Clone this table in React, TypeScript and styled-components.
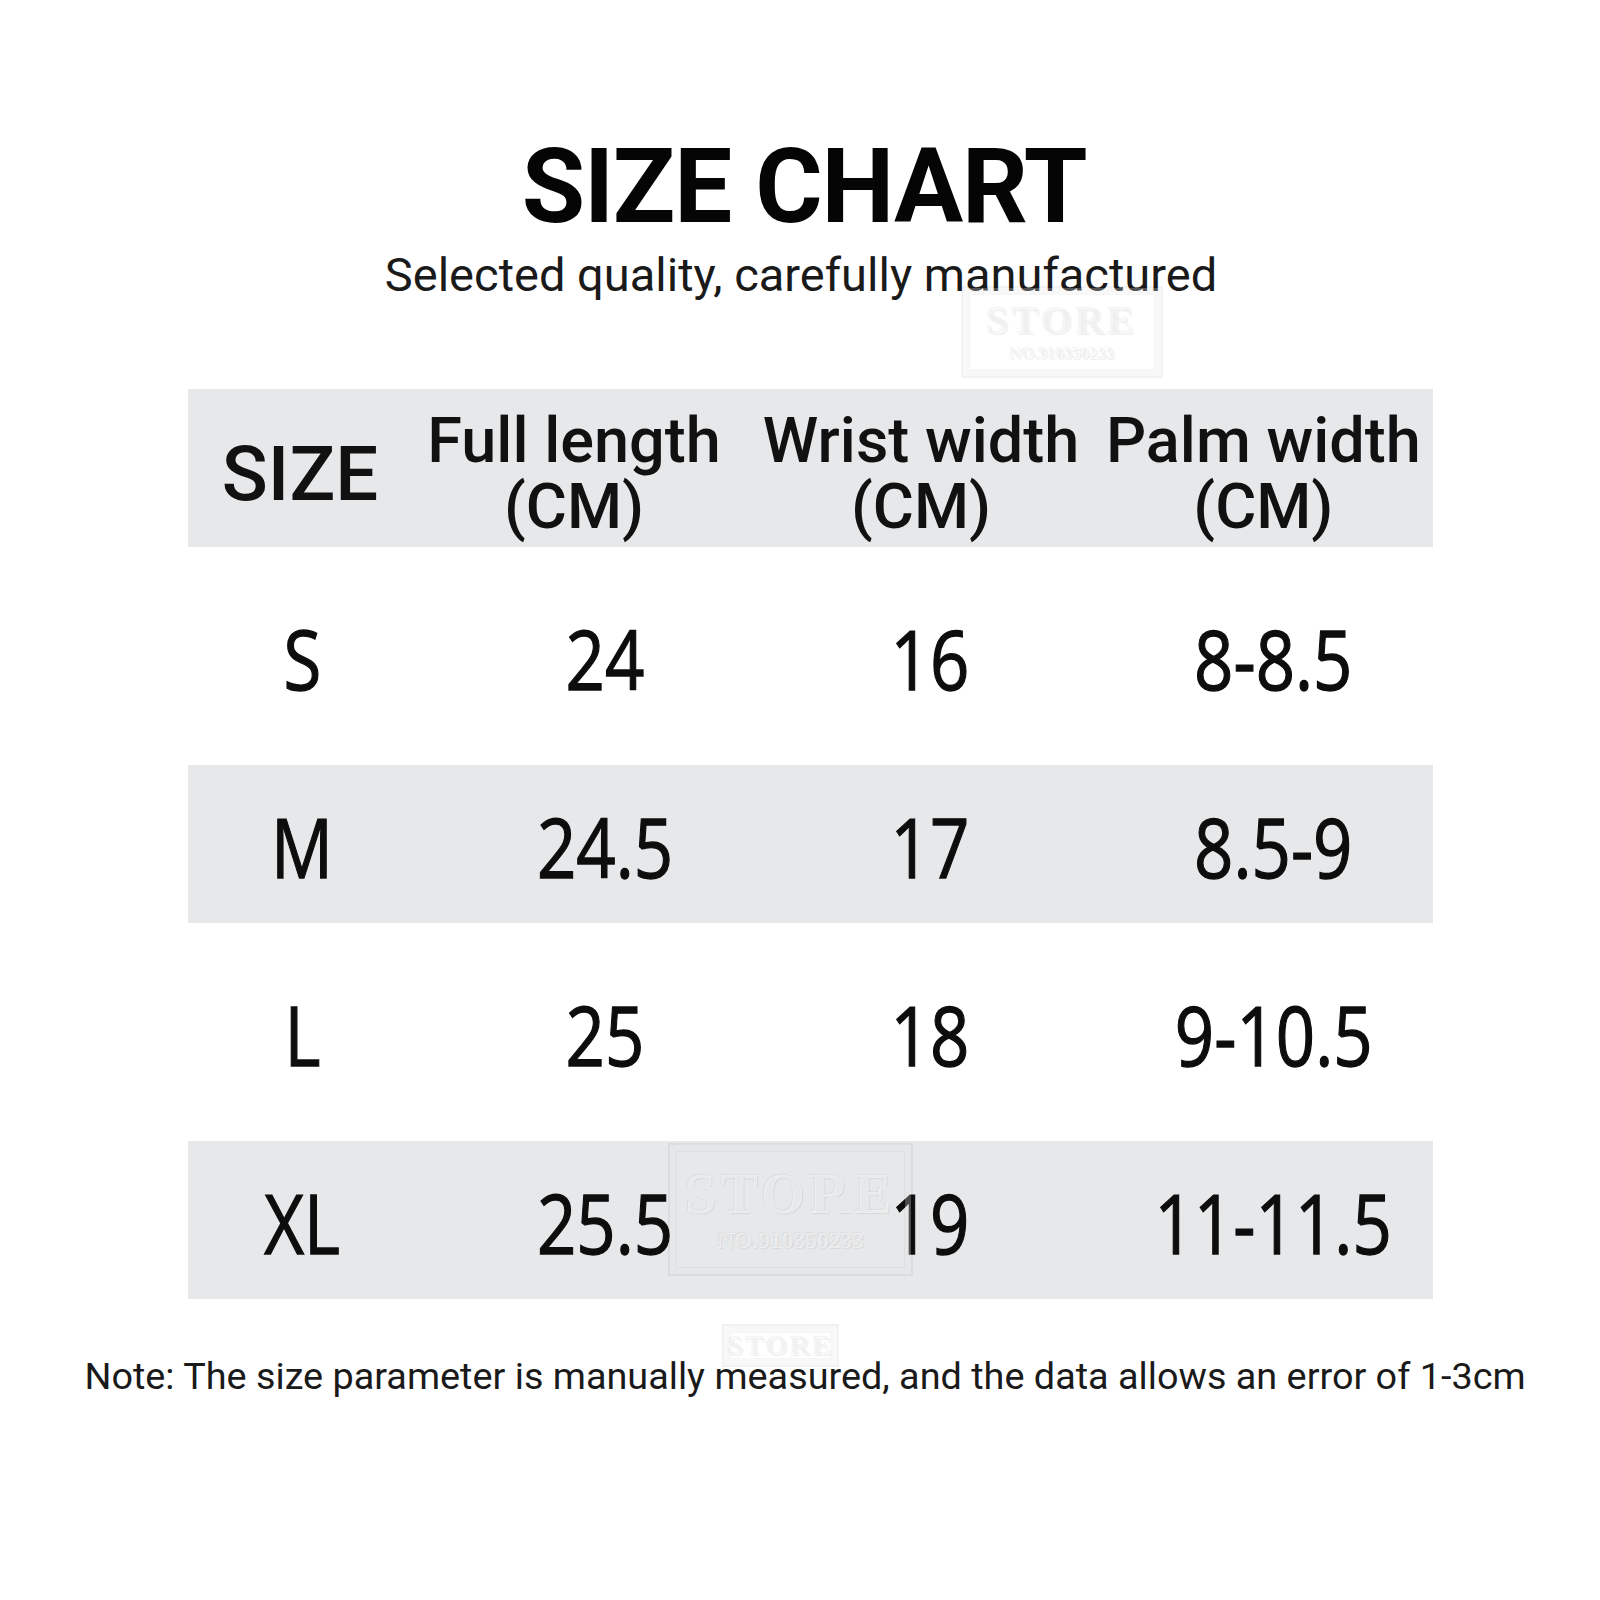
import React from "react";
import styled, { createGlobalStyle } from "styled-components";

const Global = createGlobalStyle`
  html, body { margin: 0; padding: 0; background: #ffffff; }
  body { font-family: Roboto, "Liberation Sans", sans-serif; }
`;

const Page = styled.div`
  position: relative;
  width: 1600px;
  height: 1600px;
  background: #ffffff;
  display: flex;
  flex-direction: column;
  align-items: center;
  overflow: hidden;
`;

const Title = styled.h1`
  margin: 135px 0 0 8px;
  font-family: Roboto, "Liberation Sans", sans-serif;
  font-weight: 700;
  font-size: 103px;
  line-height: 1;
  color: #050505;
  letter-spacing: -1.2px;
`;

const Subtitle = styled.p`
  margin: 13px 0 0 2px;
  font-family: Roboto, "Liberation Sans", sans-serif;
  font-weight: 400;
  font-size: 47px;
  line-height: 1;
  color: #1a1a1a;
`;

const Table = styled.div`
  align-self: flex-start;
  margin: 91px 0 0 188px;
  width: 1245px;
  display: flex;
  flex-direction: column;
  gap: 30px;
`;

const Row = styled.div<{ $shaded?: boolean }>`
  display: grid;
  grid-template-columns: 224px 324px 370px 1fr;
  height: 158px;
  background: ${(p) => (p.$shaded ? "#e6e8ea" : "transparent")};
`;

const HeadCell = styled.div<{ $big?: boolean; $dx?: number }>`
  display: flex;
  flex-direction: column;
  align-items: center;
  justify-content: center;
  font-family: Roboto, "Liberation Sans", sans-serif;
  font-weight: 500;
  font-size: ${(p) => (p.$big ? 76 : 63)}px;
  line-height: ${(p) => (p.$big ? "76px" : "66px")};
  color: #111;
  white-space: nowrap;
  padding-top: 12px;
  padding-left: ${(p) => Math.max(0, (p.$dx || 0) * 2)}px;
  padding-right: ${(p) => Math.max(0, -(p.$dx || 0) * 2)}px;
`;

const HeadLine = styled.span`
  display: block;
`;

const DataCell = styled.div<{ $dx?: number }>`
  display: flex;
  align-items: center;
  justify-content: center;
  padding-top: 4px;
  padding-left: ${(p) => Math.max(0, (p.$dx || 0) * 2)}px;
  padding-right: ${(p) => Math.max(0, -(p.$dx || 0) * 2)}px;
`;

const DataText = styled.span`
  display: inline-block;
  font-family: "Open Sans", "Noto Sans", sans-serif;
  font-weight: 400;
  font-size: 82px;
  line-height: 1;
  color: #0d0d0d;
  -webkit-text-stroke: 1.3px #0d0d0d;
  white-space: nowrap;
  transform: scaleX(0.84);
  transform-origin: center;
`;

const Note = styled.p`
  margin: 59px 0 0 10px;
  font-family: Roboto, "Liberation Sans", sans-serif;
  font-weight: 400;
  font-size: 37.8px;
  line-height: 1;
  color: #1a1a1a;
  white-space: nowrap;
`;

const Stamp = styled.div<{ $x: number; $y: number; $w: number; $h: number; $s: number }>`
  position: absolute;
  left: ${(p) => p.$x}px;
  top: ${(p) => p.$y}px;
  width: ${(p) => p.$w}px;
  height: ${(p) => p.$h}px;
  box-sizing: border-box;
  border: 2px solid rgba(0, 0, 0, 0.05);
  box-shadow: inset 0 0 0 6px rgba(255, 255, 255, 0.25), inset 0 0 0 7px rgba(0, 0, 0, 0.035);
  display: flex;
  flex-direction: column;
  align-items: center;
  justify-content: center;
  gap: ${(p) => p.$s * 0.12}px;
  pointer-events: none;
`;

const StampWord = styled.span<{ $s: number }>`
  font-family: "Liberation Serif", serif;
  font-weight: 700;
  font-size: ${(p) => p.$s}px;
  line-height: 1;
  letter-spacing: ${(p) => p.$s * 0.08}px;
  color: rgba(255, 255, 255, 0.55);
  text-shadow: 1px 1px 1px rgba(0, 0, 0, 0.07), -1px -1px 1px rgba(0, 0, 0, 0.05);
`;

const StampNo = styled.span<{ $s: number }>`
  font-family: "Liberation Serif", serif;
  font-weight: 700;
  font-size: ${(p) => p.$s * 0.42}px;
  line-height: 1;
  color: rgba(255, 255, 255, 0.55);
  text-shadow: 1px 1px 1px rgba(0, 0, 0, 0.07), -1px -1px 1px rgba(0, 0, 0, 0.05);
`;

const rows = [
  { size: "S", len: "24", wrist: "16", palm: "8-8.5", shaded: false },
  { size: "M", len: "24.5", wrist: "17", palm: "8.5-9", shaded: true },
  { size: "L", len: "25", wrist: "18", palm: "9-10.5", shaded: false },
  { size: "XL", len: "25.5", wrist: "19", palm: "11-11.5", shaded: true },
];

export default function App() {
  return (
    <Page>
      <Global />
      <Title>SIZE CHART</Title>
      <Subtitle>Selected quality, carefully manufactured</Subtitle>
      <Table>
        <Row $shaded>
          <HeadCell $big>SIZE</HeadCell>
          <HeadCell>
            <HeadLine>Full length</HeadLine>
            <HeadLine>(CM)</HeadLine>
          </HeadCell>
          <HeadCell>
            <HeadLine>Wrist width</HeadLine>
            <HeadLine>(CM)</HeadLine>
          </HeadCell>
          <HeadCell $dx={-8}>
            <HeadLine>Palm width</HeadLine>
            <HeadLine>(CM)</HeadLine>
          </HeadCell>
        </Row>
        {rows.map((r) => (
          <Row key={r.size} $shaded={r.shaded}>
            <DataCell $dx={2}>
              <DataText>{r.size}</DataText>
            </DataCell>
            <DataCell $dx={31}>
              <DataText>{r.len}</DataText>
            </DataCell>
            <DataCell $dx={9}>
              <DataText>{r.wrist}</DataText>
            </DataCell>
            <DataCell $dx={4}>
              <DataText>{r.palm}</DataText>
            </DataCell>
          </Row>
        ))}
      </Table>
      <Note>Note: The size parameter is manually measured, and the data allows an error of 1-3cm</Note>
      <Stamp $x={961} $y={286} $w={202} $h={92} $s={40}>
        <StampWord $s={40}>STORE</StampWord>
        <StampNo $s={40}>NO.910350233</StampNo>
      </Stamp>
      <Stamp $x={668} $y={1143} $w={245} $h={133} $s={56}>
        <StampWord $s={56}>STORE</StampWord>
        <StampNo $s={56}>NO.910350233</StampNo>
      </Stamp>
      <Stamp $x={722} $y={1324} $w={117} $h={43} $s={28}>
        <StampWord $s={28}>STORE</StampWord>
      </Stamp>
    </Page>
  );
}
